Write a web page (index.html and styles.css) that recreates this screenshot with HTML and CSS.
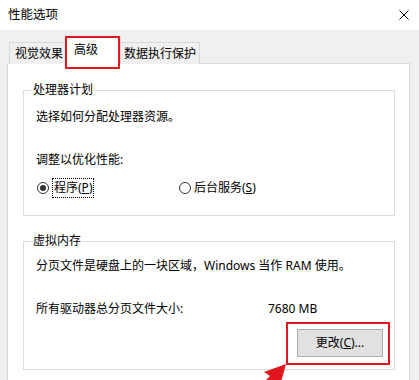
FILE: index.html
```html
<!DOCTYPE html>
<html lang="zh-CN">
<head>
    <meta charset="UTF-8">
    <title>性能选项</title>
    <link rel="stylesheet" href="styles.css">
</head>
<body>
<div class="titlebar">
    <span class="title">性能选项</span>
    <svg class="close" width="10" height="10" viewBox="0 0 10 10">
        <path d="M0.5 0.5 L9.5 9.5 M9.5 0.5 L0.5 9.5" stroke="#000" stroke-width="1"/>
    </svg>
</div>
<div class="tabs">
    <div class="tab tab-visual">视觉效果</div>
    <div class="tab tab-adv active">高级</div>
    <div class="tab tab-dep">数据执行保护</div>
</div>
<div class="panel">
    <fieldset class="group group-cpu">
        <legend>处理器计划</legend>
        <p class="line first">选择如何分配处理器资源。</p>
        <p class="line gap">调整以优化性能:</p>
        <div class="radios">
            <label class="radio-item first-item">
                <span class="radio checked"></span>
                <span class="focus">程序(<u>P</u>)</span>
            </label>
            <label class="radio-item">
                <span class="radio"></span>
                <span>后台服务(<u>S</u>)</span>
            </label>
        </div>
    </fieldset>
    <fieldset class="group group-mem">
        <legend>虚拟内存</legend>
        <p class="line first">分页文件是硬盘上的一块区域，Windows 当作 RAM 使用。</p>
        <div class="size-row">
            <span>所有驱动器总分页文件大小:</span>
            <span>7680 MB</span>
        </div>
        <div class="btn-row">
            <button class="btn">更改(<u>C</u>)...</button>
        </div>
    </fieldset>
</div>

<!-- 标注 -->
<div class="mark mark-tab"></div>
<div class="mark mark-btn"></div>
<svg class="arrow" width="40" height="18" viewBox="0 0 40 18">
    <polygon points="36,2 14,10 20,14 4,30 12,30 24,18 30,24" fill="#e3161d"/>
</svg>
</body>
</html>
```

FILE: styles.css
```css
body {
    margin: 0;
    width: 419px;
    height: 380px;
    overflow: hidden;
    background: #f0f0f0;
    font-family: "Noto Sans", "Noto Sans CJK SC", sans-serif;
    font-size: 12px;
    line-height: 16px;
    color: #000;
    position: relative;
}
.titlebar {
    height: 30px;
    background: #fff;
    display: flex;
    align-items: center;
    justify-content: space-between;
    padding: 0 10px 0 8px;
}
.title {
    font-size: 12.5px;
}
.close {
    display: block;
    margin-top: -1px;
}
.tabs {
    display: flex;
    align-items: flex-end;
    height: 34px;
    padding-left: 9px;
    margin-bottom: -1px;
    position: relative;
    z-index: 1;
}
.tab {
    height: 22px;
    box-sizing: border-box;
    border: 1px solid #d9d9d9;
    border-bottom: none;
    background: #f0f0f0;
    padding: 3px 0 0 5px;
}
.tab-visual {
    width: 57px;
    border-right: none;
}
.tab-adv {
    width: 55px;
}
.tab-dep {
    width: 79px;
    border-left: none;
    padding-left: 3px;
}
.tab.active {
    height: 27px;
    background: #fff;
    padding: 4px 0 0 7px;
    border-color: #d9d9d9;
}
.panel {
    margin-left: 7px;
    width: 401px;
    height: 298px;
    background: #fff;
    border: 1px solid #d9d9d9;
    border-bottom: none;
    padding-top: 18px;
}
.group {
    margin: 0 0 0 15px;
    width: 347px;
    border: 1px solid #dcdcdc;
    padding: 0 11px 0 12px;
}
.group legend {
    padding: 0 2px;
    margin-left: -5px;
    line-height: 16px;
}
.group-cpu {
    padding-bottom: 17px;
}
.group-mem {
    margin-top: 17px;
    padding-bottom: 12px;
}
.line {
    margin: 0;
}
.line.first {
    margin-top: 11px;
}
.group-mem .line.first {
    margin-top: 9px;
}
.line.gap {
    margin-top: 27px;
}
.radios {
    display: flex;
    margin-top: 10px;
    height: 20px;
    align-items: center;
}
.radio-item {
    display: flex;
    align-items: center;
}
.first-item {
    width: 142px;
    margin-left: 1px;
}
.radio {
    width: 10px;
    height: 10px;
    border: 1px solid #333;
    border-radius: 50%;
    margin-right: 3px;
    position: relative;
}
.radio.checked::after {
    content: "";
    position: absolute;
    left: 2px;
    top: 2px;
    width: 6px;
    height: 6px;
    border-radius: 50%;
    background: #333;
}
.focus {
    border: 1px dotted #000;
    padding: 1px 1px 1px 1px;
    line-height: 16px;
}
.size-row {
    display: grid;
    grid-template-columns: 232px auto;
    margin-top: 27px;
}
.btn-row {
    display: flex;
    justify-content: flex-end;
    margin-top: 12px;
}
.btn {
    width: 86px;
    height: 28px;
    background: #e1e1e1;
    border: 1px solid #adadad;
    font: inherit;
    color: #000;
    padding: 0;
}
.mark {
    position: absolute;
    border: 2px solid #e3161d;
    z-index: 2;
}
.mark-tab {
    left: 65px;
    top: 36px;
    width: 51px;
    height: 29px;
}
.mark-btn {
    left: 286px;
    top: 322px;
    width: 100px;
    height: 39px;
}
.arrow {
    position: absolute;
    left: 250px;
    top: 362px;
    z-index: 2;
}
```
